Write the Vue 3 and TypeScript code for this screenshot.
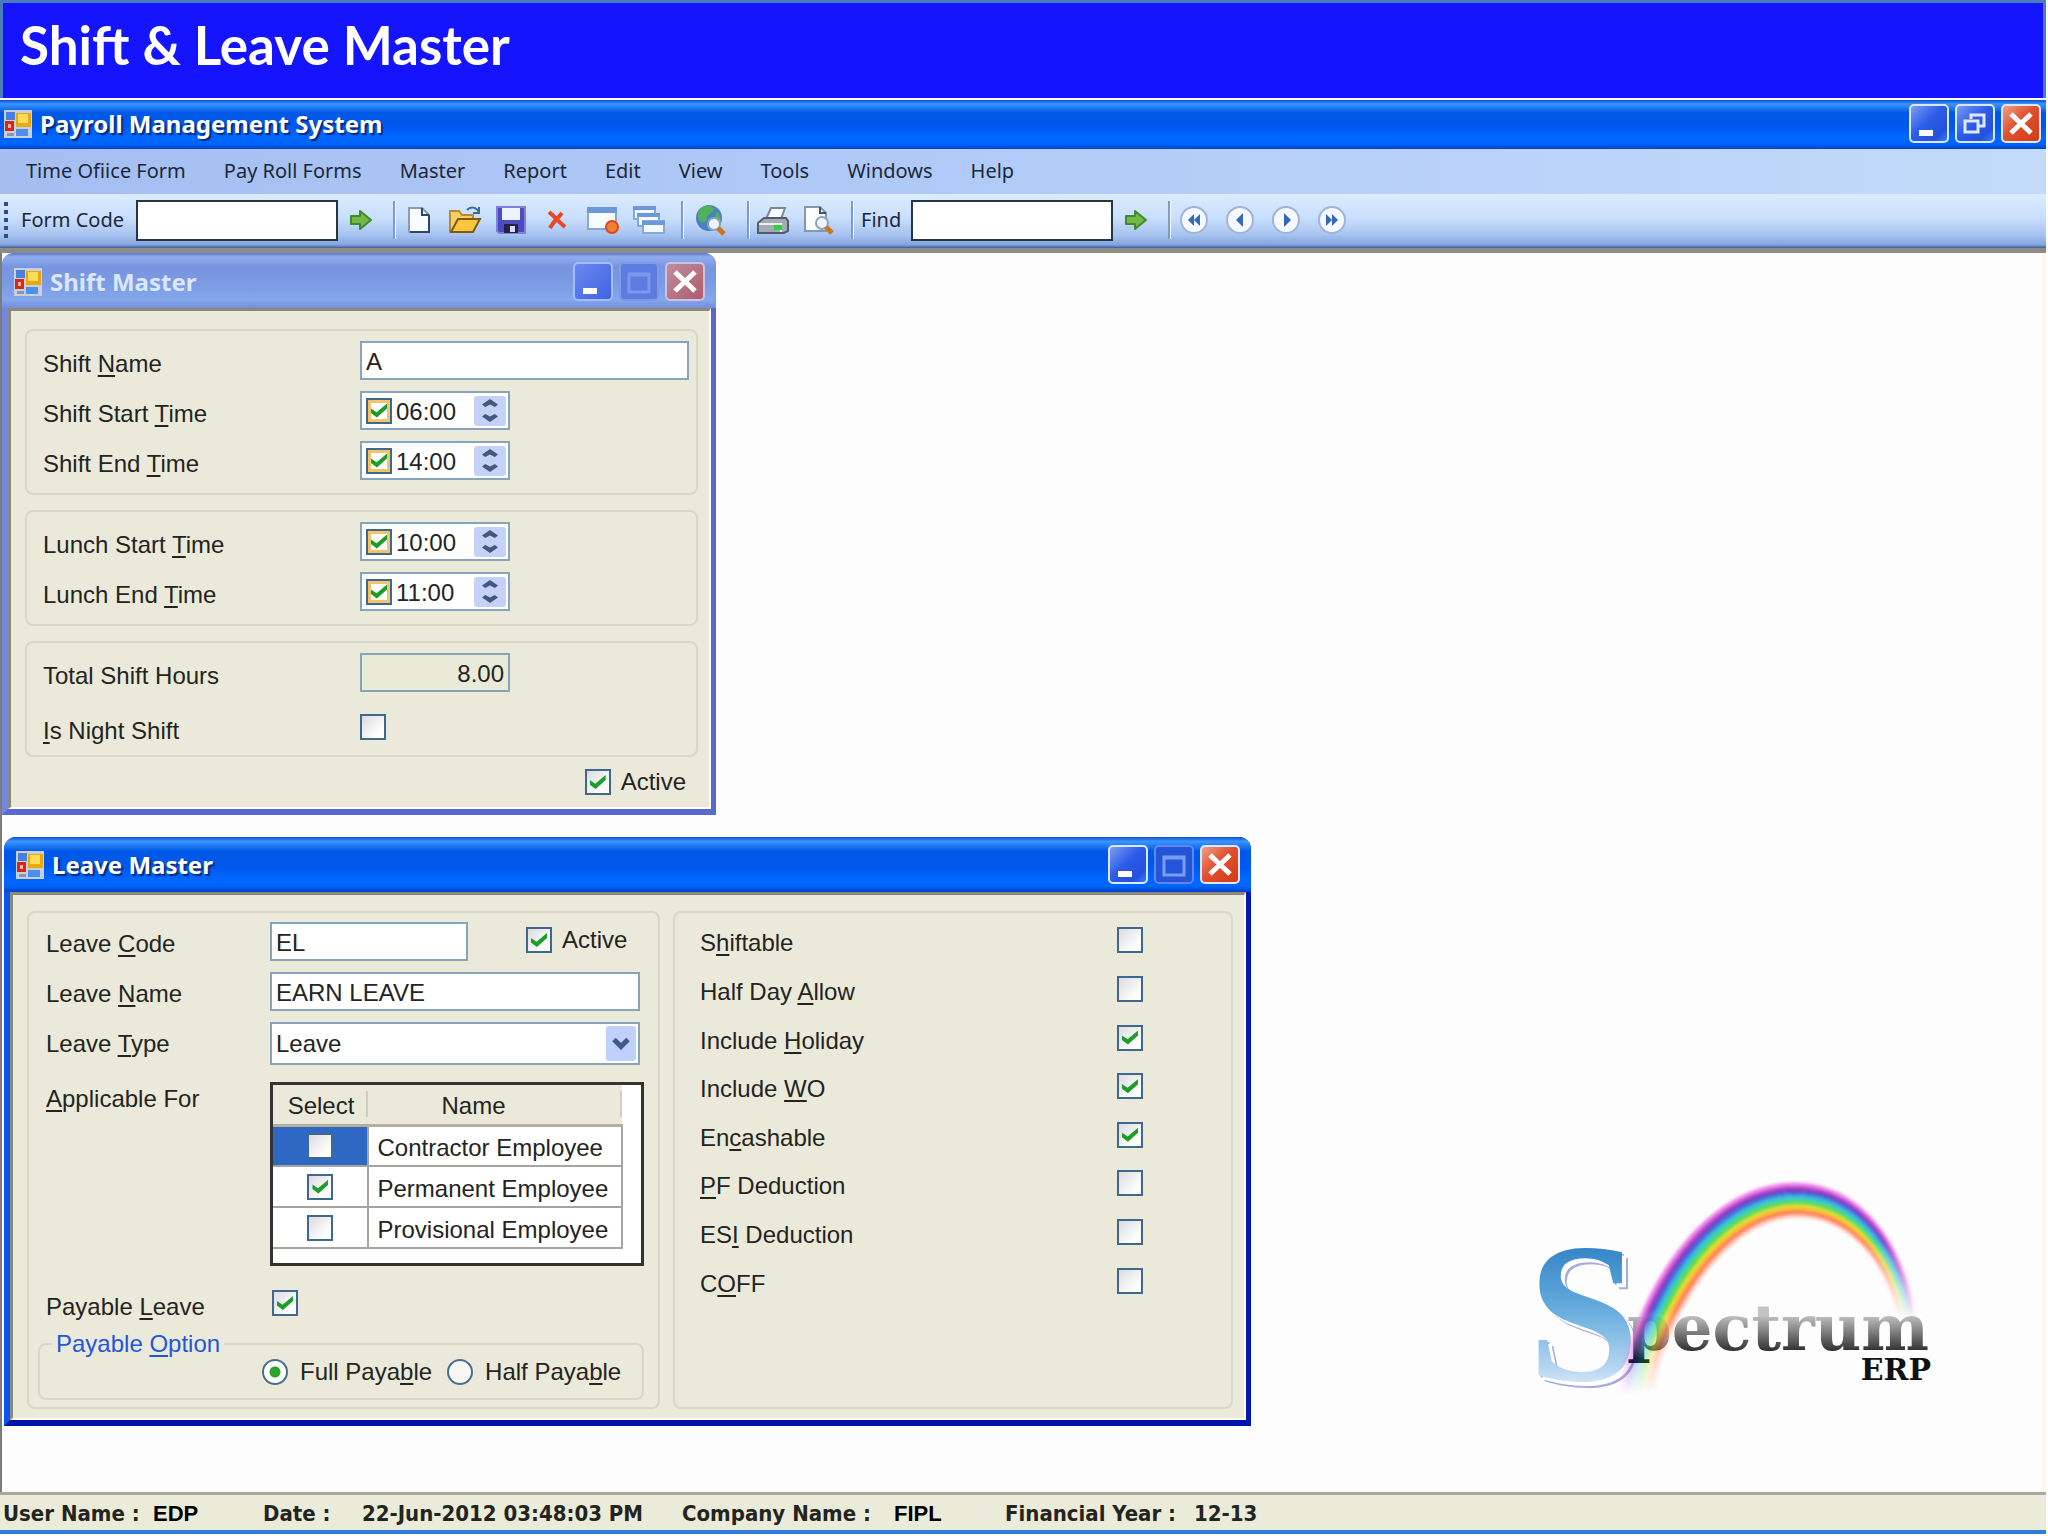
<script setup lang="ts">
import { reactive, ref } from 'vue'

interface Caption {
  before: string
  key: string
  after: string
}
interface TimeField extends Caption {
  id: string
  value: string
  enabled: boolean
}
interface Flag extends Caption {
  id: string
  on: boolean
}

const menus = ['Time Ofiice Form', 'Pay Roll Forms', 'Master', 'Report', 'Edit', 'View', 'Tools', 'Windows', 'Help']

const formCode = ref('')
const findText = ref('')

const shiftName = ref('A')
const shiftTimes = reactive<TimeField[]>([
  { id: 'shift-start', before: 'Shift Start ', key: 'T', after: 'ime', value: '06:00', enabled: true },
  { id: 'shift-end', before: 'Shift End ', key: 'T', after: 'ime', value: '14:00', enabled: true },
])
const lunchTimes = reactive<TimeField[]>([
  { id: 'lunch-start', before: 'Lunch Start ', key: 'T', after: 'ime', value: '10:00', enabled: true },
  { id: 'lunch-end', before: 'Lunch End ', key: 'T', after: 'ime', value: '11:00', enabled: true },
])
const nightShift = ref(false)
const shiftActive = ref(true)

const leaveCode = ref('EL')
const leaveName = ref('EARN LEAVE')
const leaveType = ref('Leave')
const leaveActive = ref(true)
const payable = ref(true)
const payOption = ref('full')
const employees = reactive([
  { name: 'Contractor Employee', on: false },
  { name: 'Permanent Employee', on: true },
  { name: 'Provisional Employee', on: false },
])
const flags = reactive<Flag[]>([
  { id: 'shiftable', before: 'S', key: 'h', after: 'iftable', on: false },
  { id: 'half-day', before: 'Half Day ', key: 'A', after: 'llow', on: false },
  { id: 'holiday', before: 'Include ', key: 'H', after: 'oliday', on: true },
  { id: 'wo', before: 'Include ', key: 'W', after: 'O', on: true },
  { id: 'encash', before: 'En', key: 'c', after: 'ashable', on: true },
  { id: 'pf', before: '', key: 'P', after: 'F Deduction', on: false },
  { id: 'esi', before: 'ES', key: 'I', after: ' Deduction', on: false },
  { id: 'coff', before: 'C', key: 'O', after: 'FF', on: false },
])

const navButtons = [
  { label: 'First', paths: ['M15 9 9 15l6 6z', 'M21 9l-6 6 6 6z'] },
  { label: 'Previous', paths: ['M18 8l-7 7 7 7z'] },
  { label: 'Next', paths: ['M13 8l7 7-7 7z'] },
  { label: 'Last', paths: ['M9 9l6 6-6 6z', 'M15 9l6 6-6 6z'] },
]

// The rainbow is a set of ribbons blended between an outer and an inner curve.
const outer = [[355, 710], [390, 420], [600, 70], [885, 70], [1080, 70], [1220, 250], [1250, 490]]
const inner = [[470, 690], [490, 480], [680, 175], [890, 175], [1040, 175], [1160, 300], [1195, 490]]
const bandColours = ['#f08cec', '#c23fd0', '#6a35c0', '#3a68d8', '#2fb4e4', '#35d49a', '#58d838', '#d8e02c', '#ffac34', '#ff7048', '#ffc0ac']
function curve(t: number): string[] {
  return outer.map((p, i) => `${p[0] + (inner[i][0] - p[0]) * t} ${p[1] + (inner[i][1] - p[1]) * t}`)
}
const bands = bandColours.map((fill, i) => {
  const a = curve(i / bandColours.length)
  const b = curve((i + 1) / bandColours.length).reverse()
  return {
    fill,
    d: `M${a[0]}C${a[1]} ${a[2]} ${a[3]}C${a[4]} ${a[5]} ${a[6]}L${b[0]}C${b[1]} ${b[2]} ${b[3]}C${b[4]} ${b[5]} ${b[6]}Z`,
  }
})
</script>

<template>
  <div class="screen">
    <svg class="defs" aria-hidden="true">
      <defs>
        <symbol id="app-icon" viewBox="0 0 28 28">
          <rect width="28" height="28" fill="#c9cfdb" />
          <rect x="2" y="2" width="9" height="8" fill="#4a7fe0" />
          <rect x="1" y="11" width="9" height="10" fill="#d22a16" />
          <rect x="4" y="14" width="3" height="4" fill="#ffb0a0" />
          <rect x="12" y="3" width="15" height="14" fill="#e8a810" />
          <rect x="14" y="4" width="10" height="9" fill="#ffdc58" />
          <rect x="12" y="19" width="12" height="7" fill="#4d90ea" />
          <rect x="3" y="23" width="7" height="3" fill="#8296c8" />
        </symbol>
        <symbol id="go-arrow" viewBox="0 0 22 20">
          <path d="M1 6h9V1l11 9-11 9v-5H1z" fill="#74b848" stroke="#3f8a2c" stroke-width="2" stroke-linejoin="round" />
        </symbol>
        <symbol id="lens" viewBox="0 0 20 20">
          <circle cx="8" cy="8" r="6" fill="#eef5fa" stroke="#8ba5b8" stroke-width="2" />
          <path d="M12 12l6 6" stroke="#c9761a" stroke-width="5" />
        </symbol>
        <symbol id="g-min" viewBox="0 0 40 38"><rect x="10" y="25" width="14" height="6" fill="#fff" /></symbol>
        <symbol id="g-max" viewBox="0 0 40 38"><path d="M10 11h20v18H10z M10 12h20" fill="none" stroke="currentColor" stroke-width="3" /></symbol>
        <symbol id="g-restore" viewBox="0 0 40 38"><path d="M16 14v-4h13v11h-5M10 16h13v11H10z" fill="none" stroke="#dfe8ff" stroke-width="3" /></symbol>
        <symbol id="g-close" viewBox="0 0 40 38"><path d="M10 9l20 19M30 9L10 28" stroke="#fff" stroke-width="5" /></symbol>
      </defs>
    </svg>

    <header class="banner"><h1>Shift &amp; Leave Master</h1></header>

    <div class="caption main">
      <svg class="app-icon"><use href="#app-icon" /></svg>
      <h2>Payroll Management System</h2>
      <button class="sys" aria-label="Minimize"><svg><use href="#g-min" /></svg></button>
      <button class="sys" aria-label="Restore"><svg><use href="#g-restore" /></svg></button>
      <button class="sys close" aria-label="Close"><svg><use href="#g-close" /></svg></button>
    </div>

    <nav class="menu">
      <button v-for="m in menus" :key="m">{{ m }}</button>
    </nav>

    <div class="toolbar">
      <span class="grip"><i v-for="n in 5" :key="n"></i></span>
      <label for="form-code" class="code-label">Form Code</label>
      <input id="form-code" v-model="formCode" class="bar-input" type="text" />
      <button class="tool" aria-label="Go"><svg width="22" height="20"><use href="#go-arrow" /></svg></button>
      <span class="sep"></span>
      <button class="tool" aria-label="New">
        <svg width="24" height="28" viewBox="0 0 24 28">
          <path d="M2 2h13l7 7v17H2z" fill="#fbfcff" stroke="#8c9ab8" stroke-width="2" />
          <path d="M15 2v7h7M22 9v17H3" fill="none" stroke="#2f4668" stroke-width="2" />
        </svg>
      </button>
      <button class="tool" aria-label="Open">
        <svg width="34" height="28" viewBox="0 0 34 28">
          <path d="M2 25V5h9l3 4h11v16z" fill="#f3cf66" stroke="#b98a28" stroke-width="2" />
          <path d="M3 26l7-13h22l-7 13z" fill="#fbc63c" stroke="#7a5c18" stroke-width="2" />
          <path d="M19 4c4-4 9-3 12 2m0-5v6h-6" fill="none" stroke="#3d6a94" stroke-width="2" />
        </svg>
      </button>
      <button class="tool" aria-label="Save">
        <svg width="30" height="28" viewBox="0 0 30 28">
          <path d="M1 1h28v26H3l-2-2z" fill="#4a4cc0" stroke="#7f80dc" stroke-width="2" />
          <rect x="6" y="2" width="18" height="12" fill="#eef2ff" />
          <rect x="8" y="18" width="14" height="9" fill="#23234a" />
          <rect x="14" y="20" width="5" height="6" fill="#dcdcf0" />
        </svg>
      </button>
      <button class="tool" aria-label="Delete">
        <svg width="20" height="20" viewBox="0 0 20 20">
          <path d="M2 2c5 4 10 10 16 15M15 3C11 8 6 12 3 18" fill="none" stroke="#ee4426" stroke-width="4" />
        </svg>
      </button>
      <button class="tool" aria-label="Close form">
        <svg width="34" height="28" viewBox="0 0 34 28">
          <rect x="2" y="2" width="28" height="21" fill="#f8fbff" stroke="#86a8d8" stroke-width="2" />
          <rect x="1" y="1" width="30" height="6" fill="#6a98d8" />
          <circle cx="26" cy="21" r="6" fill="#f08038" stroke="#d84c10" stroke-width="2" />
        </svg>
      </button>
      <button class="tool" aria-label="Cascade">
        <svg width="34" height="30" viewBox="0 0 34 30">
          <g fill="#f4f9ff" stroke="#86a8d8" stroke-width="2">
            <rect x="2" y="2" width="21" height="12" /><rect x="6" y="9" width="21" height="12" /><rect x="11" y="16" width="21" height="12" />
          </g>
          <path d="M1 3h23M5 10h23M10 18h23" stroke="#6a98d8" stroke-width="4" />
        </svg>
      </button>
      <span class="sep"></span>
      <button class="tool wide" aria-label="Search web">
        <svg width="34" height="32" viewBox="0 0 34 32">
          <circle cx="15" cy="14" r="13" fill="#4a80c0" />
          <path d="M6 5c6-5 12-4 14 0-1 5-6 4-7 9-1 5-5 6-8 2-2-4-1-8 1-11zM22 7c4 3 6 9 4 13l-5-3z" fill="#52b05c" />
          <use href="#lens" x="12" y="12" width="20" height="20" />
        </svg>
      </button>
      <span class="sep"></span>
      <button class="tool" aria-label="Print">
        <svg width="34" height="28" viewBox="0 0 34 28">
          <path d="M10 13l5-11h14l-4 11z" fill="#fafcff" stroke="#7c8898" stroke-width="2" />
          <path d="M2 17l6-5h22l2 3v10l-4 2H2z" fill="#a4acb8" stroke="#535c6c" stroke-width="2" />
          <path d="M3 18h22v8" fill="none" stroke="#eef0f4" stroke-width="2" />
          <rect x="18" y="19" width="8" height="5" fill="#2fd03c" />
        </svg>
      </button>
      <button class="tool" aria-label="Print preview">
        <svg width="34" height="30" viewBox="0 0 34 30">
          <path d="M3 2h15l6 6v18H3z" fill="#fbfcff" stroke="#8896b0" stroke-width="2" />
          <path d="M18 2v6h6" fill="none" stroke="#3f5474" stroke-width="2" />
          <use href="#lens" x="12" y="10" width="20" height="20" />
        </svg>
      </button>
      <span class="sep"></span>
      <label for="find" class="find-label">Find</label>
      <input id="find" v-model="findText" class="bar-input" type="text" />
      <button class="tool" aria-label="Find next"><svg width="22" height="20"><use href="#go-arrow" /></svg></button>
      <span class="sep"></span>
      <button v-for="b in navButtons" :key="b.label" class="tool" :aria-label="b.label">
        <svg width="30" height="30" viewBox="0 0 30 30">
          <circle cx="15" cy="15" r="13" fill="#f5f8ff" stroke="#a3b3d8" stroke-width="2" />
          <path v-for="p in b.paths" :key="p" :d="p" fill="#3468b8" />
        </svg>
      </button>
    </div>

    <main class="desk">
      <section class="window inactive">
        <div class="caption">
          <svg class="app-icon"><use href="#app-icon" /></svg>
          <h2>Shift Master</h2>
          <button class="sys" aria-label="Minimize"><svg><use href="#g-min" /></svg></button>
          <button class="sys dim" aria-label="Maximize" disabled><svg><use href="#g-max" /></svg></button>
          <button class="sys close" aria-label="Close"><svg><use href="#g-close" /></svg></button>
        </div>
        <form class="body" @submit.prevent>
          <div class="group">
            <div class="row">
              <label for="shift-name">Shift <u>N</u>ame</label>
              <input id="shift-name" v-model="shiftName" class="text grow" type="text" />
            </div>
            <div v-for="f in shiftTimes" :key="f.id" class="row">
              <label :for="f.id">{{ f.before }}<u>{{ f.key }}</u>{{ f.after }}</label>
              <span class="time">
                <input v-model="f.enabled" class="check gold" type="checkbox" :aria-label="f.before + 'enabled'" />
                <input :id="f.id" v-model="f.value" type="text" />
                <span class="spin"><button type="button" class="up" aria-label="Up"></button><button type="button" class="down" aria-label="Down"></button></span>
              </span>
            </div>
          </div>
          <div class="group">
            <div v-for="f in lunchTimes" :key="f.id" class="row">
              <label :for="f.id">{{ f.before }}<u>{{ f.key }}</u>{{ f.after }}</label>
              <span class="time">
                <input v-model="f.enabled" class="check gold" type="checkbox" :aria-label="f.before + 'enabled'" />
                <input :id="f.id" v-model="f.value" type="text" />
                <span class="spin"><button type="button" class="up" aria-label="Up"></button><button type="button" class="down" aria-label="Down"></button></span>
              </span>
            </div>
          </div>
          <div class="group totals">
            <div class="row">
              <label for="total">Total Shift Hours</label>
              <input id="total" class="text total" type="text" value="8.00" readonly />
            </div>
            <div class="row">
              <label for="night"><u>I</u>s Night Shift</label>
              <input id="night" v-model="nightShift" class="check mid" type="checkbox" />
            </div>
          </div>
          <label class="tick shift-active"><input v-model="shiftActive" class="check" type="checkbox" />Active</label>
        </form>
      </section>

      <section class="window leave">
        <div class="caption">
          <svg class="app-icon"><use href="#app-icon" /></svg>
          <h2>Leave Master</h2>
          <button class="sys" aria-label="Minimize"><svg><use href="#g-min" /></svg></button>
          <button class="sys dim" aria-label="Maximize" disabled><svg><use href="#g-max" /></svg></button>
          <button class="sys close" aria-label="Close"><svg><use href="#g-close" /></svg></button>
        </div>
        <form class="body" @submit.prevent>
          <div class="group details">
            <div class="row">
              <label for="leave-code">Leave <u>C</u>ode</label>
              <input id="leave-code" v-model="leaveCode" class="text code" type="text" />
              <label class="tick leave-active"><input v-model="leaveActive" class="check" type="checkbox" />Active</label>
            </div>
            <div class="row">
              <label for="leave-name">Leave <u>N</u>ame</label>
              <input id="leave-name" v-model="leaveName" class="text full" type="text" />
            </div>
            <div class="row">
              <label for="leave-type">Leave <u>T</u>ype</label>
              <span class="combo">
                <select id="leave-type" v-model="leaveType"><option>Leave</option></select>
                <svg viewBox="0 0 30 34" aria-hidden="true"><path d="M8 13l7 7 7-7" fill="none" stroke="#3f5a8c" stroke-width="5" /></svg>
              </span>
            </div>
            <div class="row top applicable">
              <span id="applicable" class="label"><u>A</u>pplicable For</span>
              <div class="list">
                <table aria-labelledby="applicable">
                  <thead><tr><th>Select</th><th class="name">Name</th></tr></thead>
                  <tbody>
                    <tr v-for="(e, i) in employees" :key="e.name">
                      <td :class="{ current: i === 0 }"><input v-model="e.on" class="check" type="checkbox" :aria-label="e.name" /></td>
                      <td>{{ e.name }}</td>
                    </tr>
                  </tbody>
                </table>
              </div>
            </div>
            <div class="row top payable">
              <label for="payable">Payable <u>L</u>eave</label>
              <input id="payable" v-model="payable" class="check" type="checkbox" />
            </div>
            <fieldset>
              <legend>Payable <u>O</u>ption</legend>
              <label class="tick"><input v-model="payOption" type="radio" name="pay" value="full" /><span>Full Paya<u>b</u>le</span></label>
              <label class="tick"><input v-model="payOption" type="radio" name="pay" value="half" /><span>Half Paya<u>b</u>le</span></label>
            </fieldset>
          </div>
          <div class="group flags">
            <div v-for="f in flags" :key="f.id" class="flag">
              <label :for="f.id">{{ f.before }}<u>{{ f.key }}</u>{{ f.after }}</label>
              <input :id="f.id" v-model="f.on" class="check" type="checkbox" />
            </div>
          </div>
        </form>
      </section>

      <svg class="logo" viewBox="0 0 460 260" role="img" aria-label="Spectrum ERP">
        <defs>
          <linearGradient id="s-fill" x1="0" y1="0" x2="0" y2="1">
            <stop offset="0.15" stop-color="#2a7ec4" /><stop offset="0.5" stop-color="#69aede" /><stop offset="0.75" stop-color="#b4d6f2" /><stop offset="0.9" stop-color="#f4f8ff" />
          </linearGradient>
          <linearGradient id="word-fill" gradientUnits="userSpaceOnUse" x1="0" y1="156" x2="0" y2="204">
            <stop offset="0" stop-color="#c4c4c4" /><stop offset="0.7" stop-color="#3a3a3a" /><stop offset="0.9" stop-color="#000" />
          </linearGradient>
          <linearGradient id="fade-left" gradientUnits="userSpaceOnUse" x1="0" y1="450" x2="0" y2="710">
            <stop offset="0" stop-color="#fff" /><stop offset="0.5" stop-color="#666" /><stop offset="1" stop-color="#000" />
          </linearGradient>
          <linearGradient id="fade-right" gradientUnits="userSpaceOnUse" x1="0" y1="250" x2="0" y2="485">
            <stop offset="0" stop-color="#fff" /><stop offset="1" stop-color="#000" />
          </linearGradient>
          <mask id="arc-fade" maskUnits="userSpaceOnUse" x="0" y="0" width="1380" height="780">
            <rect width="885" height="780" fill="url(#fade-left)" /><rect x="885" width="495" height="780" fill="url(#fade-right)" />
          </mask>
          <filter id="soft"><feGaussianBlur stdDeviation="5" /></filter>
        </defs>
        <text x="28" y="221" class="big-s">S</text>
        <text x="127" y="191" class="word">pectrum</text>
        <g transform="scale(0.33333)" mask="url(#arc-fade)">
          <g filter="url(#soft)"><path v-for="b in bands" :key="b.fill" :d="b.d" :fill="b.fill" /></g>
        </g>
        <text x="431" y="221" class="erp">ERP</text>
      </svg>
    </main>

    <footer class="status">
      <span>User Name :</span><span class="plain">EDP</span>
      <span>Date :</span><span>22-Jun-2012 03:48:03 PM</span>
      <span>Company Name :</span><span class="plain">FIPL</span>
      <span>Financial Year :</span><span>12-13</span>
    </footer>
  </div>
</template>

<style>
body {
  margin: 0;
  background: #fdfdfd;
}
</style>

<style scoped>
* {
  box-sizing: border-box;
}
.screen {
  display: flex;
  flex-direction: column;
  min-height: 100vh;
  padding: 0 2px 2px 0;
  font-family: "Liberation Sans", Arial, sans-serif;
  font-size: 24px;
  line-height: 28px;
  color: #24241e;
}
.defs {
  position: absolute;
  width: 0;
  height: 0;
}
button,
input,
select {
  margin: 0;
  padding: 0;
  font: inherit;
  color: inherit;
  border: 0;
  background: none;
}
button {
  display: flex;
  align-items: center;
  justify-content: center;
}
h1,
h2 {
  margin: 0;
}
u {
  text-decoration-thickness: 2px;
  text-underline-offset: 3px;
}

.banner {
  height: 98px;
  padding: 14px 17px;
  border: solid #4a7ebb;
  border-width: 3px 3px 0;
  background: #1414ff;
}
.banner h1 {
  font: bold 53px/56px Lato, sans-serif;
  color: #fff;
}

.caption {
  display: flex;
  align-items: center;
  gap: 6px;
  height: 55px;
  padding: 0 4px 0 6px;
  background: linear-gradient(#0a50d0, #3a96ff 8%, #0058e6 26%, #0058ee 55%, #0068ff 76%, #0064fa 90%, #0040c8);
  color: #fff;
}
.caption.main {
  height: 49px;
  margin-top: 2px;
  padding: 0 5px 2px 4px;
}
.caption h2 {
  flex: 1;
  margin-left: 2px;
  font: bold 24px/32px "Noto Sans", sans-serif;
  text-shadow: 2px 2px 1px #0a2a80;
}
.app-icon {
  width: 28px;
  height: 28px;
}
.sys {
  width: 40px;
  height: 39px;
  border: 2px solid #dce8ff;
  border-radius: 5px;
  background: linear-gradient(135deg, #7c9cf4, #2c5ce8 45%, #2450dc 80%, #3c7cf8);
}
.sys svg {
  width: 40px;
  height: 38px;
  flex: none;
}
.close {
  background: linear-gradient(135deg, #f0a088, #e05030 45%, #d03c14);
}
.dim {
  border-color: #5c88f0;
  color: #7c9cf0;
  background: #2454d8;
}

.menu {
  display: flex;
  gap: 38px;
  height: 45px;
  padding: 0 0 2px 26px;
  background: linear-gradient(90deg, #a4bef2, #b0caf8 45%, #c4dafa);
}
.menu,
.toolbar {
  font: 20px/26px "Noto Sans", sans-serif;
  color: #1c2838;
}
.toolbar {
  display: flex;
  align-items: center;
  height: 59px;
  padding: 0 0 2px 4px;
  border-bottom: 5px solid #8c8c84;
  background: linear-gradient(#dcecff, #c8defc 45%, #a8c4f0 75%, #84a4e0 94%, #3c5c9c);
}
.grip {
  display: flex;
  flex-direction: column;
  gap: 4px;
  width: 17px;
}
.grip i {
  width: 4px;
  height: 4px;
  background: #304c84;
}
.code-label {
  width: 115px;
}
.find-label {
  width: 50px;
  margin-left: 7px;
}
.bar-input {
  width: 202px;
  height: 41px;
  padding: 0 6px;
  border: 2px solid #26363e;
  background: #fff;
}
.tool {
  width: 46px;
  height: 40px;
}
.tool.wide {
  width: 54px;
}
.sep {
  width: 3px;
  height: 38px;
  margin: 0 0 0 9px;
  border-left: 2px solid #7c9cd0;
  background: #f4f8ff;
}

.desk {
  position: relative;
  flex: 1;
  display: flex;
  flex-direction: column;
  align-items: flex-start;
  gap: 22px;
  padding-bottom: 60px;
  border-left: 2px solid #7c7c7c;
  border-right: 4px solid #fbf8ee;
}
.window {
  width: 714px;
  border: solid #0a54ec;
  border-width: 0 5px 6px 6px;
  border-bottom-color: #0014a8;
  border-right-color: #0018b4;
  border-radius: 12px 12px 0 0;
  background: #0a58ee;
}
.window > .caption {
  margin: 0 -5px 0 -6px;
  border-radius: 12px 12px 0 0;
  padding: 0 11px 0 12px;
}
.inactive {
  border-color: #7088e4;
  border-right-color: #5868cc;
  border-bottom-color: #5868cc;
}
.inactive > .caption {
  padding-top: 2px;
  background: linear-gradient(#5c74d0, #90acf0 7%, #7894de 26%, #7c9ce4 60%, #84a8ec 85%, #748cdc);
  color: #dce6fc;
}
.inactive h2 {
  text-shadow: none;
}
.inactive .close {
  border-color: #c8c4e4;
  background: linear-gradient(135deg, #c08c9c, #b05c6c);
}
.inactive .sys:not(.close) {
  border-color: #a4bcf8;
  background: linear-gradient(135deg, #6c88ec, #3c64e4);
}
.inactive .dim:not(.close) {
  border-color: #8098e8;
  color: #7c98ec;
  background: #5c7ce0;
}
.leave {
  width: 1247px;
  margin-left: 2px;
}
.body {
  display: flex;
  flex-direction: column;
  gap: 11px;
  padding: 18px 11px 11px 14px;
  border: solid #8c887c;
  border-width: 3px 2px 2px 3px;
  border-right-color: #fffdf4;
  border-bottom-color: #fffdf4;
  background: #ebeada;
}
.leave .body {
  flex-direction: row;
  gap: 13px;
  padding: 16px 11px 9px 14px;
}
.group {
  display: flex;
  flex-direction: column;
  gap: 11px;
  padding: 10px 7px 13px 16px;
  border: 2px solid #d9d8c6;
  border-radius: 8px;
}
.inactive .group + .group {
  margin-top: 4px;
}
.inactive .totals {
  gap: 16px;
  padding-bottom: 8px;
}
.row {
  display: flex;
  align-items: flex-start;
  min-height: 39px;
}
.row > label:first-child,
.row > .label {
  width: 317px;
  padding-top: 9px;
}
.text,
.time,
.combo {
  height: 39px;
  border: 2px solid #86a4bc;
  background: #fff;
}
.text {
  padding: 2px 4px 0;
}
.grow {
  flex: 1;
  min-width: 0;
}
.total {
  width: 150px;
  text-align: right;
  background: #eaead9;
}
.check {
  appearance: none;
  position: relative;
  flex: none;
  width: 26px;
  height: 26px;
  border: 2px solid #3e6890;
  background: linear-gradient(135deg, #dcdce0, #fff 80%);
}
.check:checked::after {
  content: "";
  position: absolute;
  inset: 4px 3px;
  background: #1c9c28;
  clip-path: polygon(0 35%, 35% 62%, 100% 0, 100% 36%, 37% 100%, 0 68%);
}
.mid {
  margin-top: 6px;
}
.gold {
  background: #fff;
  box-shadow: inset 0 0 0 3px #f4c468;
}
.time {
  display: flex;
  align-items: center;
  width: 150px;
  padding: 0 2px 0 4px;
}
.time input[type="text"] {
  width: 82px;
  height: 35px;
  padding: 3px 0 0 4px;
}
.spin {
  display: flex;
  flex-direction: column;
  width: 32px;
  height: 30px;
  border-radius: 3px;
  background: #c4d2fa;
}
.spin button {
  flex: 1;
}
.spin button::after {
  content: "";
  width: 16px;
  height: 8px;
  background: #44587c;
  clip-path: polygon(50% 0, 100% 70%, 80% 100%, 50% 70%, 20% 100%, 0 70%);
}
.spin .down::after {
  rotate: 180deg;
}
.tick {
  display: flex;
  align-items: center;
  gap: 10px;
}
.shift-active {
  align-self: flex-end;
  margin-right: 12px;
}

.details {
  width: 633px;
  padding: 9px 14px 7px 9px;
}
.details .row {
  padding-left: 8px;
}
.details .row > label:first-child,
.details .row > .label {
  width: 224px;
  padding-top: 8px;
}
.details .top > label:first-child,
.details .top > .label {
  padding-top: 3px;
}
.code {
  width: 198px;
}
.leave-active {
  margin-left: 58px;
  margin-top: 4px;
}
.full,
.combo {
  width: 370px;
}
.combo {
  position: relative;
  height: 43px;
}
.combo select {
  appearance: none;
  width: 100%;
  height: 100%;
  padding: 0 4px;
}
.combo svg {
  position: absolute;
  top: 2px;
  right: 2px;
  width: 30px;
  height: 35px;
  border-radius: 3px;
  background: #c0d0fa;
  pointer-events: none;
}
.applicable {
  margin-top: 6px;
}
.list {
  width: 376px;
  height: 184px;
  margin-left: 2px;
  border: 3px solid #34342e;
  background: #fff;
}
table {
  width: 350px;
  border-collapse: collapse;
  table-layout: fixed;
}
th {
  height: 40px;
  padding: 4px 0 0;
  border: solid #b4b09c;
  border-width: 0 0 3px;
  background: linear-gradient(90deg, #d0cebc, #d0cebc) right center / 2px 26px no-repeat #ebeada;
  font-weight: normal;
}
.name {
  padding-right: 44px;
}
th:first-child,
td:first-child {
  width: 95px;
  text-align: center;
}
td {
  height: 41px;
  padding: 4px 0 0 8px;
  border: solid #a4a4a0;
  border-width: 0 2px 2px 0;
  white-space: nowrap;
}
td:first-child {
  padding: 0;
}
td .check {
  display: block;
  margin: 0 auto;
}
.current {
  background: #2f68c4;
}
.payable {
  margin-top: 13px;
}
.details .payable {
  min-height: 26px;
  height: 26px;
}
.payable .check {
  margin-left: 2px;
}
fieldset {
  display: flex;
  gap: 15px;
  margin: 3px 0 0;
  padding: 0 0 12px 222px;
  border: 2px solid #d9d8c6;
  border-radius: 8px;
}
legend {
  margin-left: -210px;
  padding: 0 4px;
  color: #2457d8;
}
[type="radio"] {
  appearance: none;
  width: 26px;
  height: 26px;
  border: 2px solid #45708f;
  border-radius: 50%;
  background: #f6f6f4;
}
[type="radio"]:checked {
  background: radial-gradient(circle, #2aa42c 5px, #fff 6px);
}
fieldset .tick {
  gap: 12px;
}
.flags {
  flex: 1;
  display: grid;
  grid-template-rows: repeat(8, 1fr);
  gap: 0;
  padding: 3px 88px 102px 25px;
}
.flag {
  display: flex;
  align-items: center;
  justify-content: space-between;
}
.flag label {
  padding-top: 6px;
}

.logo {
  position: absolute;
  right: 82px;
  bottom: 73px;
  width: 460px;
  height: 260px;
  overflow: visible;
}
.big-s {
  font: bold 200px "Liberation Serif", serif;
  fill: url(#s-fill);
  filter: drop-shadow(4px 4px 0 #fff) drop-shadow(2px 2px 0 #a4acdc);
}
.word {
  font: bold 64px "DejaVu Serif", serif;
  fill: url(#word-fill);
}
.erp {
  font: bold 30px "DejaVu Serif", serif;
  text-anchor: end;
  fill: #111;
}

.status {
  display: grid;
  grid-template-columns: 150px 110px 99px 320px 212px 111px 189px 1fr;
  align-items: center;
  height: 42px;
  padding: 2px 0 0 3px;
  border-top: 3px solid #a8a89c;
  border-bottom: 4px solid #2f7bdc;
  background: #eaebd9;
  font: bold 22px/28px "DejaVu Sans Condensed", "DejaVu Sans", sans-serif;
  white-space: nowrap;
}
.plain {
  font: bold 22px/28px "Liberation Sans", sans-serif;
  color: #000;
}
</style>
